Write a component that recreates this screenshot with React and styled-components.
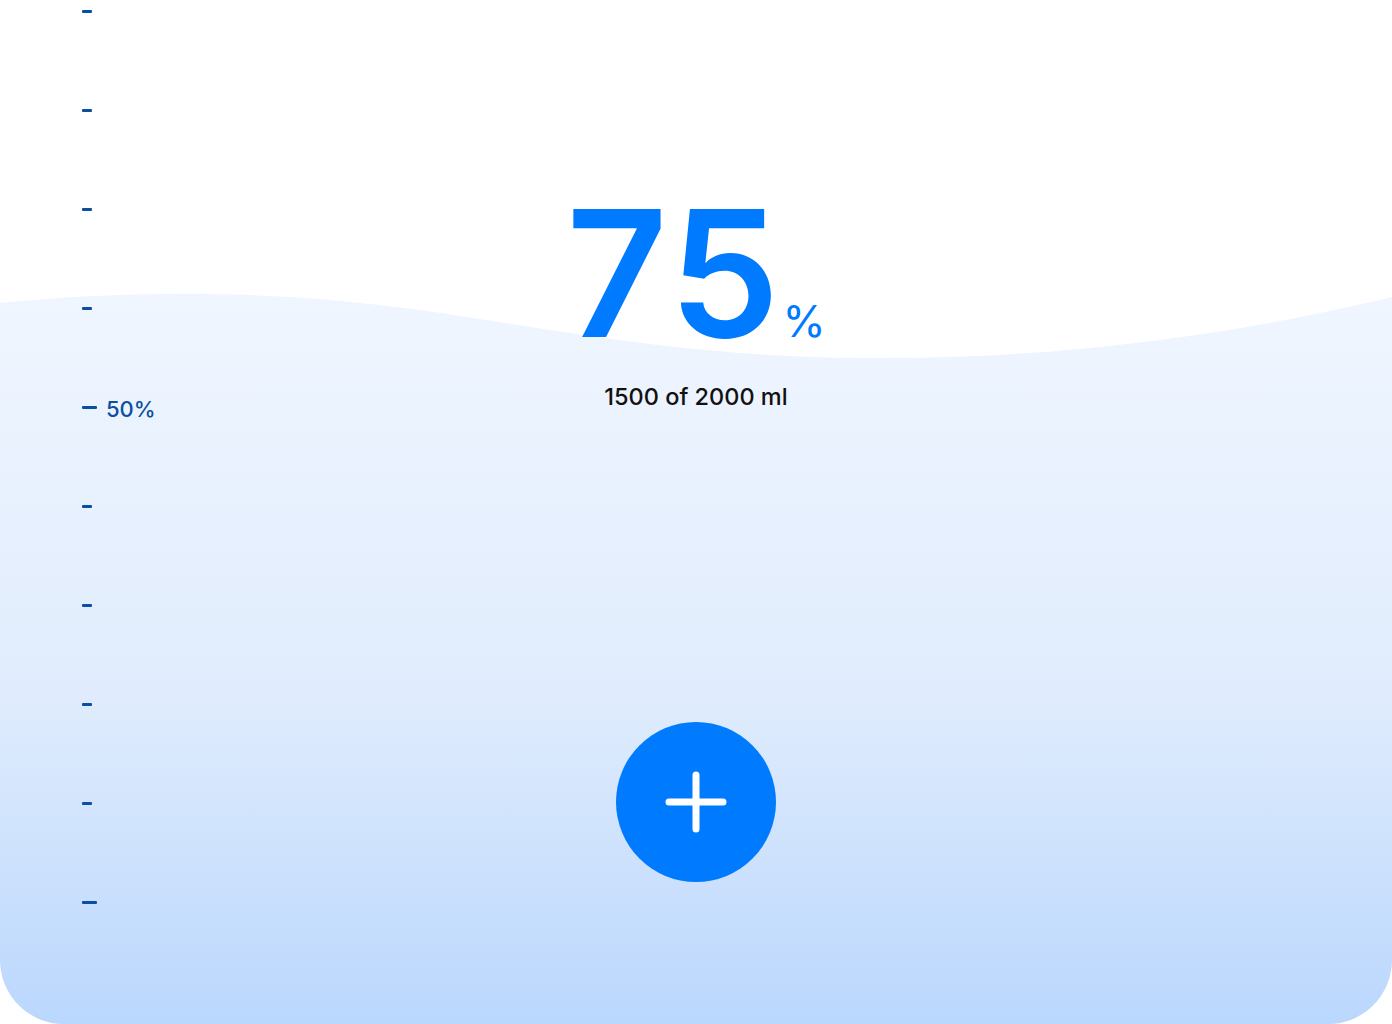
import React from 'react';
import styled, { createGlobalStyle } from 'styled-components';

const GlobalStyle = createGlobalStyle`
  html, body {
    margin: 0;
    padding: 0;
    background: #ffffff;
  }
  body {
    font-family: Inter, "Noto Sans", "Liberation Sans", sans-serif;
  }
`;

const Card = styled.div`
  position: relative;
  width: 1392px;
  height: 1024px;
  overflow: hidden;
  background: #ffffff;
  border-radius: 0 0 64px 64px;
  display: grid;
  grid-template-columns: 1fr auto 1fr;
`;

const Water = styled.svg`
  position: absolute;
  inset: 0;
  width: 100%;
  height: 100%;
  z-index: 0;
`;

const Scale = styled.div`
  position: relative;
  z-index: 1;
  display: flex;
  flex-direction: column;
  gap: 79.1px;
  padding-top: 1px;
  padding-left: 82px;
`;

const TickRow = styled.div`
  display: flex;
  align-items: center;
  gap: 9px;
  height: 20px;
`;

const Tick = styled.span`
  display: block;
  width: ${({ long }) => (long ? '15px' : '10px')};
  height: 3px;
  border-radius: 1px;
  background: #0b4fa3;
`;

const TickLabel = styled.span`
  font-size: 22px;
  font-weight: 500;
  line-height: 20px;
  color: #0b4fa3;
  margin-top: 3px;
`;

const Center = styled.div`
  position: relative;
  z-index: 1;
  display: flex;
  flex-direction: column;
  align-items: center;
  padding-top: 185px;
`;

const Amount = styled.div`
  font-size: 176px;
  font-weight: 600;
  line-height: 1;
  letter-spacing: 3px;
  color: #007aff;
  white-space: nowrap;
`;

const Unit = styled.span`
  font-size: 44px;
  font-weight: 400;
  letter-spacing: 0;
`;

const Volume = styled.div`
  margin-top: 22px;
  font-size: 23.5px;
  font-weight: 500;
  line-height: 28px;
  color: #111111;
`;

const AddButton = styled.button`
  margin-top: 311px;
  width: 160px;
  height: 160px;
  border: none;
  border-radius: 50%;
  background: #007aff;
  padding: 0;
  display: flex;
  align-items: center;
  justify-content: center;
  cursor: pointer;
`;

const ticks = [
  {}, {}, {}, {}, { long: true, label: '50%' },
  {}, {}, {}, {}, { long: true },
];

export default function App() {
  return (
    <>
      <GlobalStyle />
      <Card>
        <Water viewBox="0 0 1392 1024" preserveAspectRatio="none">
          <defs>
            <linearGradient id="waterFill" x1="0" y1="290" x2="0" y2="1024" gradientUnits="userSpaceOnUse">
              <stop offset="0" stopColor="#f0f6ff" />
              <stop offset="0.55" stopColor="#e0ecfd" />
              <stop offset="1" stopColor="#bad7fd" />
            </linearGradient>
          </defs>
          <path
            d="M0 303 C120 291 260 288 420 310 C560 330 680 356 860 358 C1050 360 1230 336 1392 297 L1392 1024 L0 1024 Z"
            fill="url(#waterFill)"
          />
        </Water>
        <Scale>
          {ticks.map((t, i) => (
            <TickRow key={i}>
              <Tick long={t.long} />
              {t.label && <TickLabel>{t.label}</TickLabel>}
            </TickRow>
          ))}
        </Scale>
        <Center>
          <Amount>
            75<Unit>%</Unit>
          </Amount>
          <Volume>1500 of 2000 ml</Volume>
          <AddButton aria-label="Add water">
            <svg width="64" height="64" viewBox="0 0 64 64" fill="none">
              <path d="M32 5 V59 M5 32 H59" stroke="#ffffff" strokeWidth="7" strokeLinecap="round" />
            </svg>
          </AddButton>
        </Center>
        <div />
      </Card>
    </>
  );
}
